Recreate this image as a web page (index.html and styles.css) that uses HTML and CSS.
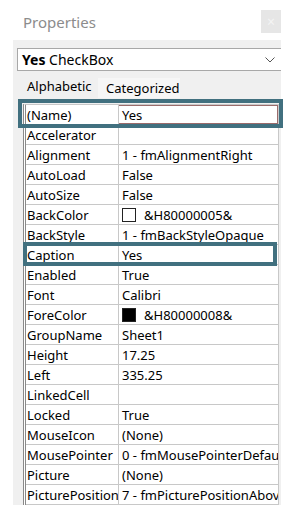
FILE: index.html
```html
<!DOCTYPE html>
<html lang="en">
<head>
    <meta charset="UTF-8">
    <title>Properties</title>
    <link rel="stylesheet" href="styles.css">
</head>
<body>
    <div class="props">
        <div class="props__title">
            <span class="props__caption">Properties</span>
            <span class="props__close">&times;</span>
        </div>
        <div class="props__panel">
            <div class="props__select">
                <span><b>Yes</b> CheckBox</span>
                <svg class="props__chevron" width="10" height="6" viewBox="0 0 10 6">
                    <path d="M0.5 0.5 L5 5 L9.5 0.5" fill="none" stroke="#555" stroke-width="1"/>
                </svg>
            </div>
            <div class="props__tabs">
                <div class="props__tab props__tab--active">Alphabetic</div>
                <div class="props__tab">Categorized</div>
            </div>
            <div class="props__grid">
                <div class="props__row props__row--selected"><span class="props__name">(Name)</span><span class="props__value">Yes</span></div>
                <div class="props__row"><span class="props__name">Accelerator</span><span class="props__value"></span></div>
                <div class="props__row"><span class="props__name">Alignment</span><span class="props__value">1 - fmAlignmentRight</span></div>
                <div class="props__row"><span class="props__name">AutoLoad</span><span class="props__value">False</span></div>
                <div class="props__row"><span class="props__name">AutoSize</span><span class="props__value">False</span></div>
                <div class="props__row"><span class="props__name">BackColor</span><span class="props__value"><i class="props__swatch"></i>&amp;H80000005&amp;</span></div>
                <div class="props__row"><span class="props__name">BackStyle</span><span class="props__value">1 - fmBackStyleOpaque</span></div>
                <div class="props__row"><span class="props__name">Caption</span><span class="props__value">Yes</span></div>
                <div class="props__row"><span class="props__name">Enabled</span><span class="props__value">True</span></div>
                <div class="props__row"><span class="props__name">Font</span><span class="props__value">Calibri</span></div>
                <div class="props__row"><span class="props__name">ForeColor</span><span class="props__value"><i class="props__swatch props__swatch--black"></i>&amp;H80000008&amp;</span></div>
                <div class="props__row"><span class="props__name">GroupName</span><span class="props__value">Sheet1</span></div>
                <div class="props__row"><span class="props__name">Height</span><span class="props__value">17.25</span></div>
                <div class="props__row"><span class="props__name">Left</span><span class="props__value">335.25</span></div>
                <div class="props__row"><span class="props__name">LinkedCell</span><span class="props__value"></span></div>
                <div class="props__row"><span class="props__name">Locked</span><span class="props__value">True</span></div>
                <div class="props__row"><span class="props__name">MouseIcon</span><span class="props__value">(None)</span></div>
                <div class="props__row"><span class="props__name">MousePointer</span><span class="props__value">0 - fmMousePointerDefault</span></div>
                <div class="props__row"><span class="props__name">Picture</span><span class="props__value">(None)</span></div>
                <div class="props__row"><span class="props__name">PicturePosition</span><span class="props__value">7 - fmPicturePositionAboveCenter</span></div>
            </div>
        </div>
        <div class="props__mark props__mark--name"></div>
        <div class="props__mark props__mark--caption"></div>
    </div>
</body>
</html>
```

FILE: styles.css
```css
:root {
    --panel: #f0f0f0;
    --line: #c8c8c8;
    --mark: #41707f;
    --row-height: 20px;
}

* {
    margin: 0;
    padding: 0;
    box-sizing: border-box;
}

body {
    background: #fff;
    font-family: "Noto Sans", "Open Sans", sans-serif;
    color: #000;
}

.props {
    position: relative;
    width: 291px;
    height: 514px;
    overflow: hidden;
}

.props__title {
    display: flex;
    align-items: center;
    justify-content: space-between;
    height: 40px;
    padding: 4px 10px 0 23px;
}

.props__caption {
    font-size: 15px;
    color: #8c8c8c;
}

.props__close {
    display: flex;
    align-items: center;
    justify-content: center;
    width: 20px;
    height: 23px;
    margin-top: -2px;
    background: #e6e6e6;
    color: #f4f4f4;
    font-size: 14px;
}

.props__panel {
    width: 268px;
    height: 465px;
    margin-left: 13px;
    padding-top: 8px;
    background: var(--panel);
}

.props__select {
    display: flex;
    align-items: center;
    justify-content: space-between;
    height: 23px;
    margin-left: 4px;
    padding: 0 6px 0 4px;
    border: 1px solid #a8a8a8;
    border-right: 0;
    background: #fff;
    font-size: 14px;
    white-space: nowrap;
}

.props__tabs {
    display: flex;
    align-items: flex-end;
    height: 23px;
    margin: 4px 0 0 6px;
}

.props__tab {
    height: 20px;
    padding: 0 0 0 8px;
    font-size: 13px;
    line-height: 21px;
    background: #f6f6f6;
}

.props__tab--active {
    width: 79px;
    height: 23px;
    padding-left: 8px;
    line-height: 23px;
    background: var(--panel);
}

.props__tab:last-child {
    width: 82px;
}

.props__grid {
    width: 256px;
    margin: 6px 0 0 10px;
    border-top: 1px solid var(--line);
    border-left: 3px double #8a8a8a;
    border-right: 1px solid var(--line);
    background: #fff;
}

.props__row {
    display: grid;
    grid-template-columns: 93px 1fr;
    height: var(--row-height);
    border-bottom: 1px solid var(--line);
    font-size: 13px;
    line-height: 20px;
    white-space: nowrap;
}

.props__name {
    padding-left: 1px;
    border-right: 1px solid var(--line);
    overflow: hidden;
}

.props__value {
    display: flex;
    align-items: center;
    padding: 1px 0 0 3px;
    overflow: hidden;
}

.props__row--selected .props__value {
    border: 1px solid #9a6b6b;
    border-left: 0;
}

.props__swatch {
    display: inline-block;
    width: 14px;
    height: 14px;
    margin: 0 8px 0 0;
    border: 1px solid #222;
    background: #fff;
}

.props__swatch--black {
    background: #000;
}

.props__mark {
    position: absolute;
    border: 4px solid var(--mark);
}

.props__mark--name {
    left: 18px;
    top: 99px;
    width: 265px;
    height: 29px;
}

.props__mark--caption {
    left: 23px;
    top: 242px;
    width: 254px;
    height: 24px;
}
```
